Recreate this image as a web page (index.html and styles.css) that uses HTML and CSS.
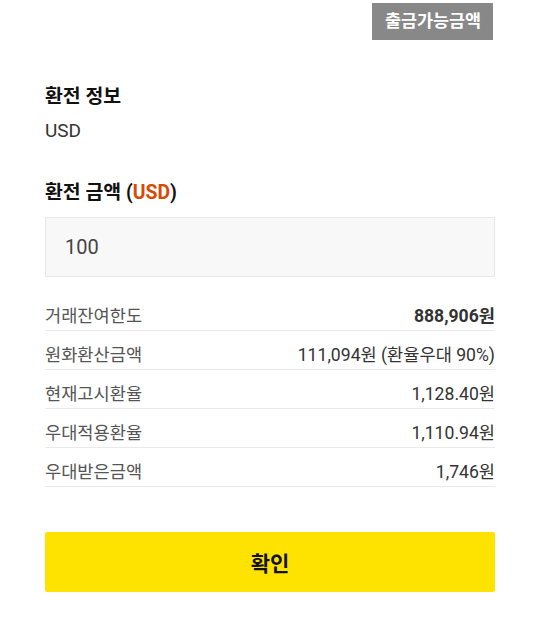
FILE: index.html
```html
<!DOCTYPE html>
<html lang="ko">
<head>
<meta charset="utf-8">
<link rel="stylesheet" href="styles.css">
</head>
<body>
<div class="page">
  <div class="top">
    <span class="badge">출금가능금액</span>
  </div>
  <section class="info">
    <h2 class="title">환전 정보</h2>
    <p class="currency">USD</p>
  </section>
  <section class="amount">
    <h2 class="title">환전 금액 (<span class="accent">USD</span>)</h2>
    <div class="input">100</div>
  </section>
  <ul class="rows">
    <li class="row"><span class="label">거래잔여한도</span><span class="value strong">888,906원</span></li>
    <li class="row"><span class="label">원화환산금액</span><span class="value">111,094원 (환율우대 90%)</span></li>
    <li class="row"><span class="label">현재고시환율</span><span class="value">1,128.40원</span></li>
    <li class="row"><span class="label">우대적용환율</span><span class="value">1,110.94원</span></li>
    <li class="row"><span class="label">우대받은금액</span><span class="value">1,746원</span></li>
  </ul>
  <button class="confirm">확인</button>
</div>
</body>
</html>
```

FILE: styles.css
```css
* { box-sizing: border-box; }
body {
  margin: 0;
  background: #fff;
  font-family: Roboto, "Noto Sans CJK KR", sans-serif;
  color: #333;
}
.page {
  padding: 0 45px;
  display: flex;
  flex-direction: column;
}
.top {
  display: flex;
  justify-content: flex-end;
  padding-top: 3px;
}
.badge {
  background: #888;
  color: #fff;
  font-weight: 700;
  font-size: 17.4px;
  height: 37px;
  line-height: 37px;
  padding: 0 12px 0 13px;
  margin-right: 2px;
}
.title {
  margin: 0;
  font-size: 19.4px;
  font-weight: 700;
  color: #111;
  line-height: 24px;
}
.info { margin-top: 45px; }
.currency {
  margin: 10px 0 0;
  font-size: 19px;
  line-height: 24px;
  color: #333;
}
.amount { margin-top: 38px; }
.accent { color: #d94a00; }
.input {
  margin-top: 12px;
  height: 60px;
  background: #f8f8f8;
  border: 1px solid #e8e8e8;
  padding: 0 19px;
  display: flex;
  align-items: center;
  font-size: 20px;
  color: #444;
}
.rows {
  list-style: none;
  margin: 15px 0 0;
  padding: 0;
}
.row {
  display: flex;
  justify-content: space-between;
  padding: 14px 0 4px;
  line-height: 20px;
  border-bottom: 1px solid #eaeaea;
  font-size: 17.6px;
}
.label { color: #555; }
.value { color: #333; }
.strong { font-weight: 700; }
.confirm {
  margin-top: 45px;
  height: 60px;
  background: #ffe300;
  border: none;
  border-radius: 2px;
  font-family: Roboto, "Noto Sans CJK KR", sans-serif;
  font-weight: 700;
  font-size: 21px;
  color: #111;
}
```
